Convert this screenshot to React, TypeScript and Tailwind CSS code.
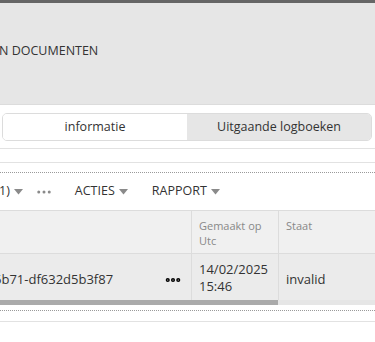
import { MoreHorizontal } from "lucide-react";

function Caret() {
  return (
    <svg width="9" height="6" viewBox="0 0 9 6" className="ml-[4px]">
      <path d="M0 0h9L4.5 5.5z" fill="#8a8a8a" />
    </svg>
  );
}

function App() {
  return (
    <div
      className="w-[375px] h-[342px] overflow-hidden bg-white text-[#333]"
      style={{ fontFamily: '"Open Sans", "Noto Sans", sans-serif' }}
    >
      <div className="h-[3px] bg-[#666]" />
      <div className="h-[102px] bg-[#e6e6e6] border-b border-[#dcdcdc] pt-[38px]">
        <h1 className="text-[12.5px] leading-[20px] whitespace-nowrap -ml-[1px]">
          N DOCUMENTEN
        </h1>
      </div>

      <div className="mt-[8px] ml-[2px] w-[370px] h-[28px] flex border border-[#dcdcdc] rounded-[5px] overflow-hidden text-[12.5px]">
        <div className="w-[184px] flex items-center justify-center bg-white">
          informatie
        </div>
        <div className="flex-1 flex items-center justify-center bg-[#e6e6e6]">
          Uitgaande logboeken
        </div>
      </div>

      <div className="mt-[7px] h-px bg-[#e2e2e2]" />
      <div className="mt-[13px] h-px bg-[#e2e2e2]" />
      <div className="mt-[9px] border-t border-dotted border-[#9a9a9a]" />

      <div className="h-[37px] flex items-center text-[12.5px] whitespace-nowrap">
        <span className="flex items-center -ml-[1px]">
          1)
          <Caret />
        </span>
        <MoreHorizontal size={18} className="ml-[12px] text-[#8a8a8a]" />
        <span className="flex items-center ml-[22px]">
          ACTIES
          <Caret />
        </span>
        <span className="flex items-center ml-[24px]">
          RAPPORT
          <Caret />
        </span>
      </div>

      <div className="border-t border-[#dcdcdc]">
        <div className="flex h-[43px] bg-[#f0f0f0] border-b border-[#dcdcdc] text-[11px] leading-[15px] text-[#888]">
          <div className="w-[192px] border-r border-[#dcdcdc]" />
          <div className="w-[87px] border-r border-[#dcdcdc] pl-[7px] pt-[7px]">
            Gemaakt op
            <br />
            Utc
          </div>
          <div className="flex-1 pl-[7px] pt-[7px]">Staat</div>
        </div>
        <div className="flex h-[46px] bg-[#ebebeb] text-[13px] leading-[17px]">
          <div className="w-[192px] border-r border-[#dcdcdc] flex items-center justify-between pr-[9px] pt-[5px] overflow-hidden">
            <span className="-ml-[6px] whitespace-nowrap">6b71-df632d5b3f87</span>
            <MoreHorizontal size={18} strokeWidth={3.5} className="text-black" />
          </div>
          <div className="w-[87px] border-r border-[#dcdcdc] pl-[7px] pt-[1px] flex items-center">
            14/02/2025
            <br />
            15:46
          </div>
          <div className="flex-1 pl-[7px] pt-[4px] flex items-center">invalid</div>
        </div>
        <div className="h-[5px] bg-[#e6e6e6]">
          <div className="w-[278px] h-full bg-[#aaa]" />
        </div>
      </div>

      <div className="mt-[5px] border-t border-dotted border-[#9a9a9a]" />
      <div className="mt-[10px] h-px bg-[#e2e2e2]" />
    </div>
  );
}

export default App;
